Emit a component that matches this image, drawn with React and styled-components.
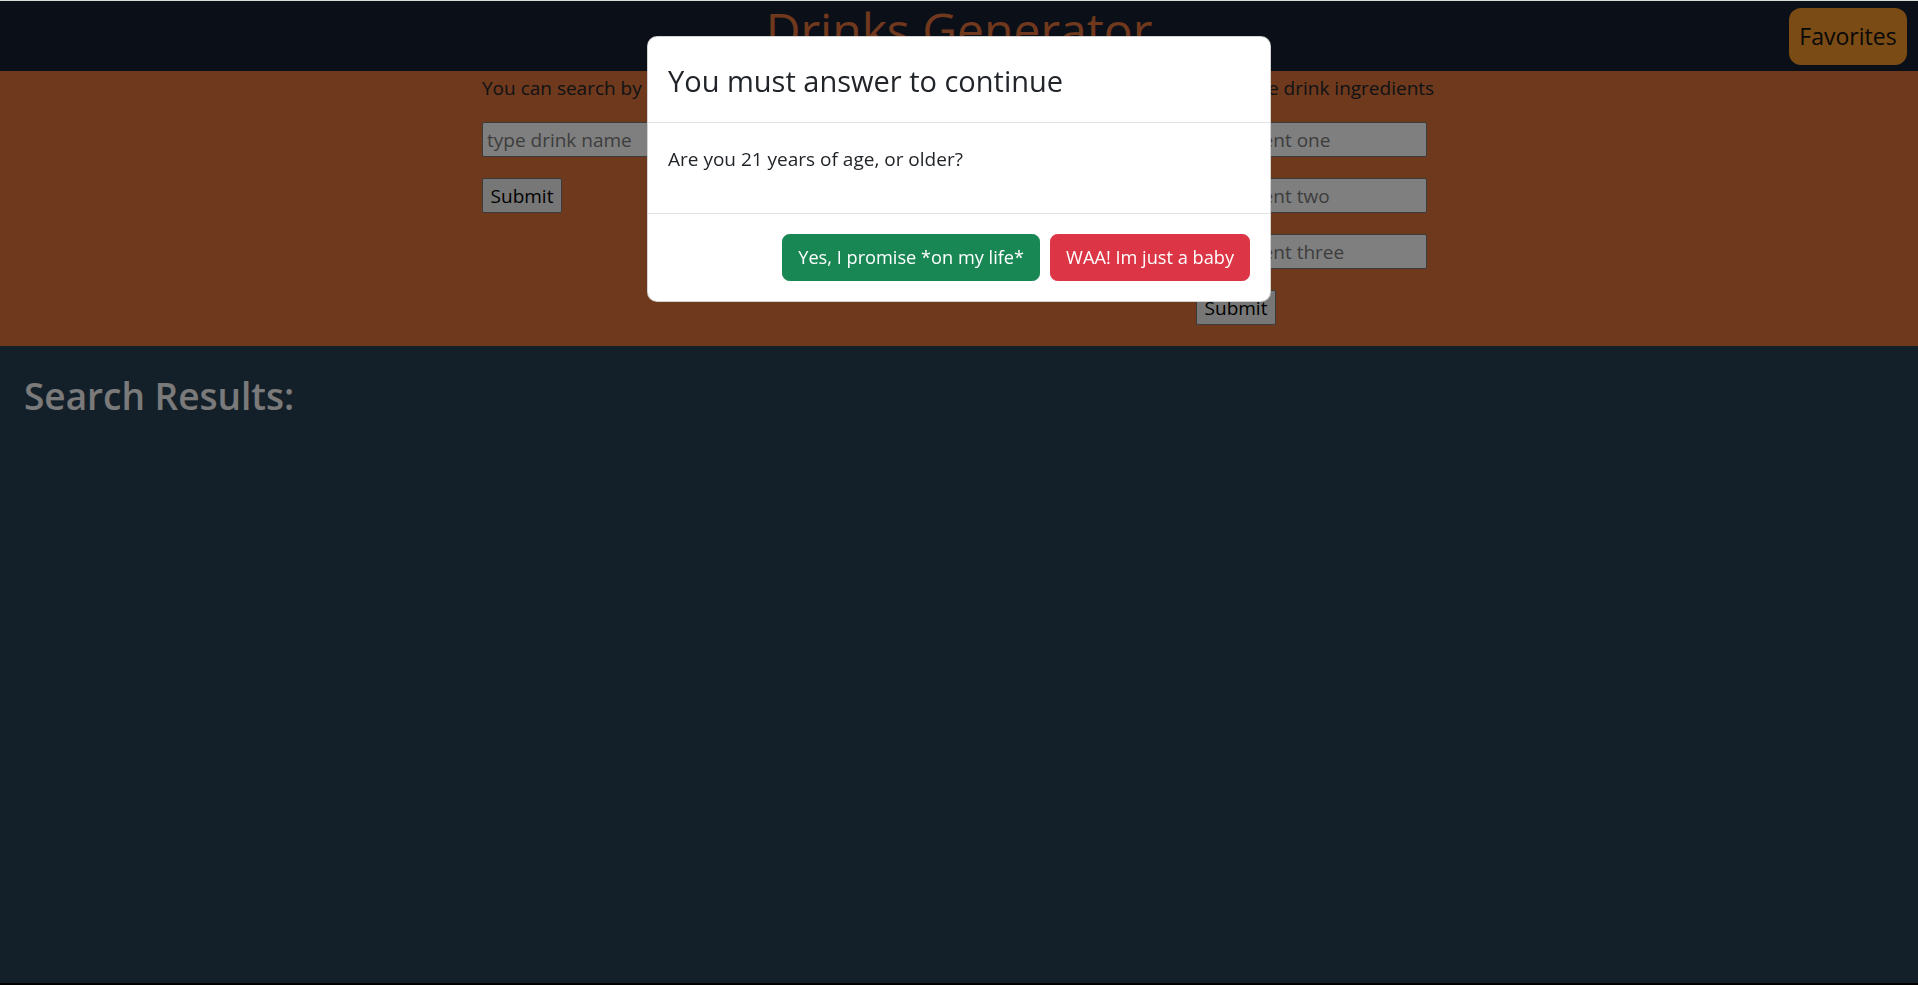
import React from 'react'
import styled, { createGlobalStyle } from 'styled-components'

const GlobalStyle = createGlobalStyle`
  * { box-sizing: border-box; }
  html, body {
    margin: 0;
    padding: 0;
  }
  body {
    background: #000;
    border-top: 1px solid #dcdcdc;
    font-family: "Open Sans", "Noto Sans", sans-serif;
    font-size: 19px;
    line-height: 1.5;
    color: #212529;
  }
`

const Page = styled.div`
  display: flex;
  flex-direction: column;
  height: 982px;
`

const Header = styled.header`
  display: grid;
  grid-template-columns: 1fr auto 1fr;
  align-items: center;
  height: 70px;
  background: #161e30;
`

const Title = styled.h1`
  grid-column: 2;
  margin: 0;
  font-size: 48px;
  font-weight: 400;
  line-height: 1.2;
  color: #e0723a;
  align-self: start;
`

const FavButton = styled.button`
  grid-column: 3;
  justify-self: end;
  margin-right: 11px;
  width: 118px;
  height: 57px;
  border: none;
  border-radius: 12px;
  background: #f49628;
  color: #111;
  font-family: inherit;
  font-size: 23px;
  padding: 0;
`

const SearchBand = styled.section`
  background: #de723a;
  padding: 0 0 21px;
`

const Forms = styled.div`
  display: flex;
  justify-content: space-between;
  width: 954px;
  margin: 0 auto;
`

const Form = styled.form`
  display: flex;
  flex-direction: column;
  align-items: flex-start;
  gap: 21px;
  min-width: 240px;
`

const Hint = styled.p`
  margin: 0 0 -2px;
  padding-top: 2px;
  font-size: 19px;
  line-height: 30px;
  color: #212529;
  white-space: nowrap;
`

const Field = styled.input`
  width: 231px;
  height: 35px;
  padding: 1px 4px;
  border: 1px solid #767676;
  border-radius: 2px;
  background: #fff;
  font-family: inherit;
  font-size: 19px;
  color: #000;
  &::placeholder {
    color: #7a7a7a;
  }
`

const Submit = styled.button`
  width: 80px;
  height: 35px;
  padding: 0;
  border: 1px solid #767676;
  border-radius: 2px;
  background: #efefef;
  font-family: inherit;
  font-size: 19px;
  color: #000;
`

const Results = styled.main`
  flex: 1;
  background: #263e52;
  padding: 28px 24px;
`

const ResultsTitle = styled.h1`
  margin: 0;
  font-size: 37px;
  font-weight: 600;
  line-height: 1.2;
  color: #f5f5f5;
`

const Backdrop = styled.div`
  position: fixed;
  top: 1px;
  left: 0;
  right: 0;
  bottom: 0;
  background: rgba(0, 0, 0, 0.5);
  z-index: 10;
`

const ModalWrap = styled.div`
  position: fixed;
  top: 0;
  left: 0;
  right: 0;
  z-index: 20;
  padding-top: 36px;
`

const Dialog = styled.div`
  width: 624px;
  margin: 0 auto;
  background: #fff;
  border: 1px solid rgba(0, 0, 0, 0.175);
  border-radius: 10px;
  display: flex;
  flex-direction: column;
`

const ModalHeader = styled.div`
  padding: 21px 20px 19px;
  border-bottom: 1px solid #dee2e6;
`

const ModalTitle = styled.h5`
  margin: 0;
  font-size: 29px;
  font-weight: 500;
  line-height: 45px;
  color: #212529;
`

const ModalBody = styled.div`
  padding: 21px 20px 19px;
  p {
    margin: 0 0 20px;
    line-height: 30px;
  }
`

const ModalFooter = styled.div`
  display: flex;
  justify-content: flex-end;
  padding: 15px;
  border-top: 1px solid #dee2e6;
`

const Btn = styled.button`
  margin: 5px;
  padding: 0 15px;
  height: 47px;
  border: 1px solid ${p => p.bg};
  border-radius: 7.5px;
  background: ${p => p.bg};
  color: #fff;
  font-family: inherit;
  font-size: 18.2px;
  line-height: 1.5;
`

export default function App() {
  return (
    <>
      <GlobalStyle />
      <Page>
        <Header>
          <Title>Drinks Generator</Title>
          <FavButton>Favorites</FavButton>
        </Header>
        <SearchBand>
          <Forms>
            <Form>
              <Hint>You can search by name</Hint>
              <Field placeholder="type drink name" />
              <Submit type="button">Submit</Submit>
            </Form>
            <Form>
              <Hint>Or by the drink ingredients</Hint>
              <Field placeholder="ingredient one" />
              <Field placeholder="ingredient two" />
              <Field placeholder="ingredient three" />
              <Submit type="button">Submit</Submit>
            </Form>
          </Forms>
        </SearchBand>
        <Results>
          <ResultsTitle>Search Results:</ResultsTitle>
        </Results>
      </Page>
      <Backdrop />
      <ModalWrap>
        <Dialog>
          <ModalHeader>
            <ModalTitle>You must answer to continue</ModalTitle>
          </ModalHeader>
          <ModalBody>
            <p>Are you 21 years of age, or older?</p>
          </ModalBody>
          <ModalFooter>
            <Btn bg="#198754">Yes, I promise *on my life*</Btn>
            <Btn bg="#dc3545">WAA! Im just a baby</Btn>
          </ModalFooter>
        </Dialog>
      </ModalWrap>
    </>
  )
}
